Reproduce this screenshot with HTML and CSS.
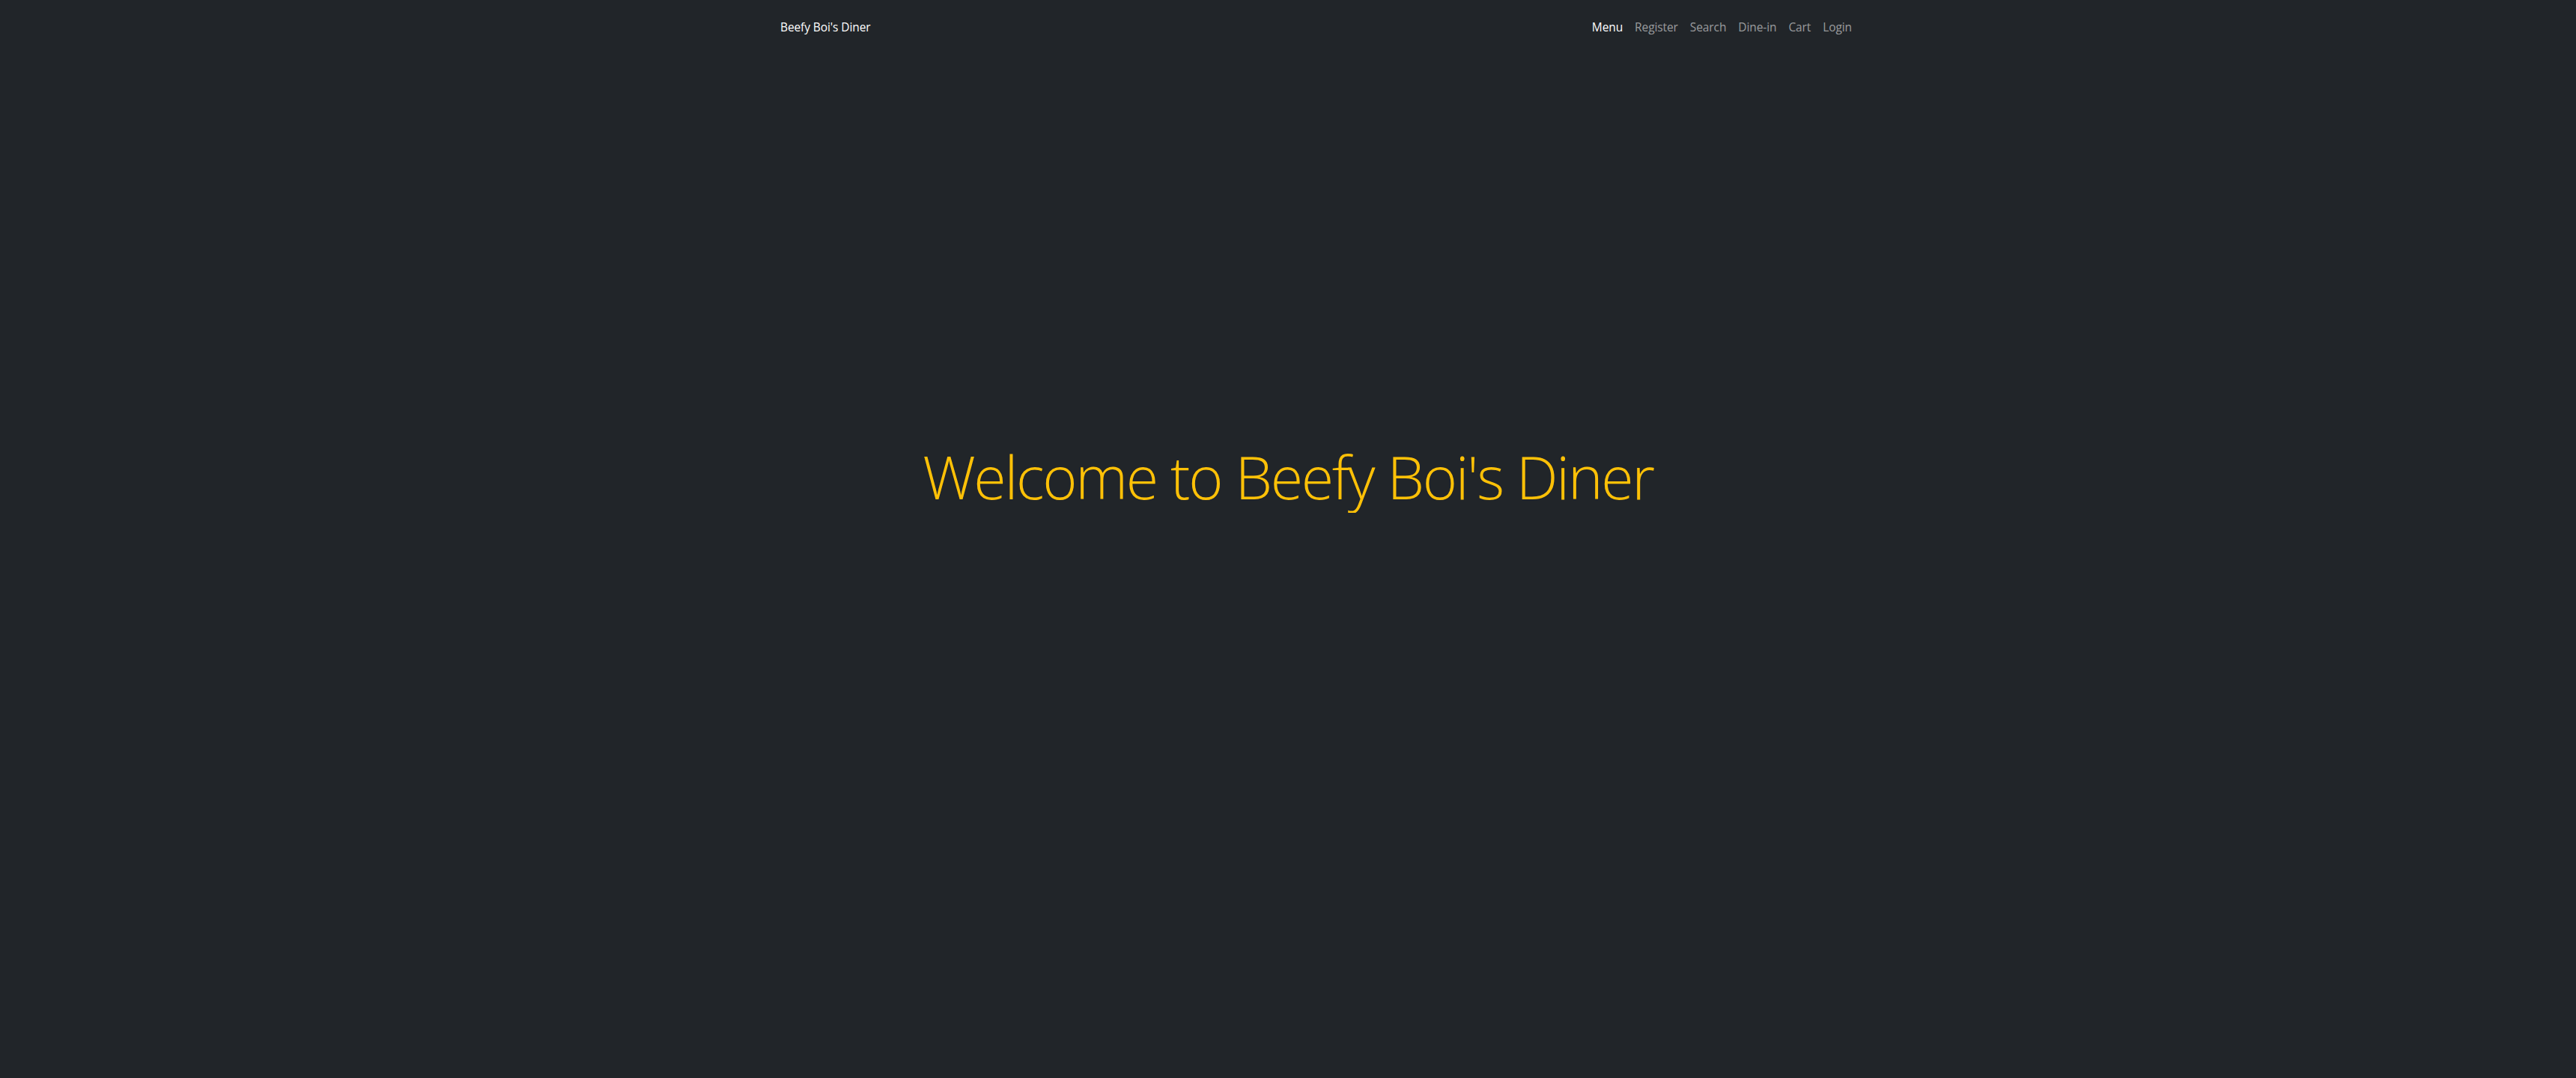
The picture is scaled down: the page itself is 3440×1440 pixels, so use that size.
FILE: index.html
```html
<!DOCTYPE html>
<html lang="en">
<head>
<meta charset="utf-8">
<title>Beefy Boi's Diner</title>
<link rel="stylesheet" href="styles.css">
</head>
<body>
<nav class="navbar">
  <div class="nav-inner">
    <a class="brand" href="#">Beefy Boi's Diner</a>
    <ul class="nav-links">
      <li><a class="active" href="#">Menu</a></li>
      <li><a href="#">Register</a></li>
      <li><a href="#">Search</a></li>
      <li><a href="#">Dine-in</a></li>
      <li><a href="#">Cart</a></li>
      <li><a href="#">Login</a></li>
    </ul>
  </div>
</nav>
<main class="hero">
  <h1 class="title">Welcome to Beefy Boi's Diner</h1>
</main>
</body>
</html>
```
FILE: styles.css
```css
html, body {
  margin: 0;
  padding: 0;
  background: #212529;
}
body {
  font-family: "Open Sans", "Noto Sans", sans-serif;
  color: #fff;
}
a { text-decoration: none; }
.navbar {
  height: 70px;
}
.nav-inner {
  max-width: 1506px;
  margin: 0 auto;
  padding-left: 75px;
  box-sizing: border-box;
  height: 100%;
  display: flex;
  align-items: center;
  justify-content: space-between;
}
.brand {
  color: #fff;
  font-size: 15.5px;
  letter-spacing: -0.1px;
  padding-top: 2px;
}
.nav-links {
  list-style: none;
  margin: 0;
  padding: 0;
  display: flex;
}
.nav-links a {
  display: block;
  color: rgba(255,255,255,0.55);
  font-size: 15.5px;
  letter-spacing: -0.1px;
  padding: 2px 8px 0;
}
.nav-links li:last-child a { padding-right: 0; }
.nav-links a.active { color: #fff; }
.hero {
  display: flex;
  justify-content: center;
  padding-top: 520px;
}
.title {
  margin: 0;
  font-weight: 300;
  font-size: 79px;
  letter-spacing: -2.3px;
  line-height: 1.2;
  color: #ffc107;
}
```
